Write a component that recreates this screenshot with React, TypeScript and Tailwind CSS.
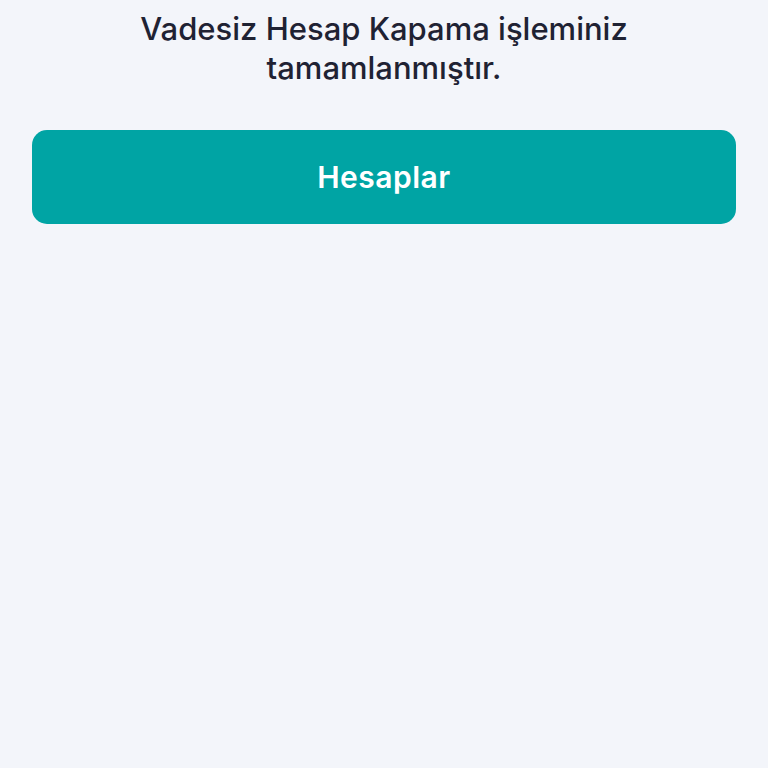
export default function App() {
  return (
    <div className="min-h-[768px] w-full bg-[#f3f5fa] px-8 pt-[9px] font-['Inter',sans-serif]">
      <p className="mx-auto text-center text-[31px] font-medium leading-[39px] text-[#1f2233]">
        Vadesiz Hesap Kapama işleminiz
        <br />
        tamamlanmıştır.
      </p>
      <button className="mt-[43px] flex h-[94px] w-full items-center justify-center rounded-[15px] bg-[#00a4a4] text-[30px] font-semibold tracking-[0.5px] text-white">
        Hesaplar
      </button>
    </div>
  );
}
